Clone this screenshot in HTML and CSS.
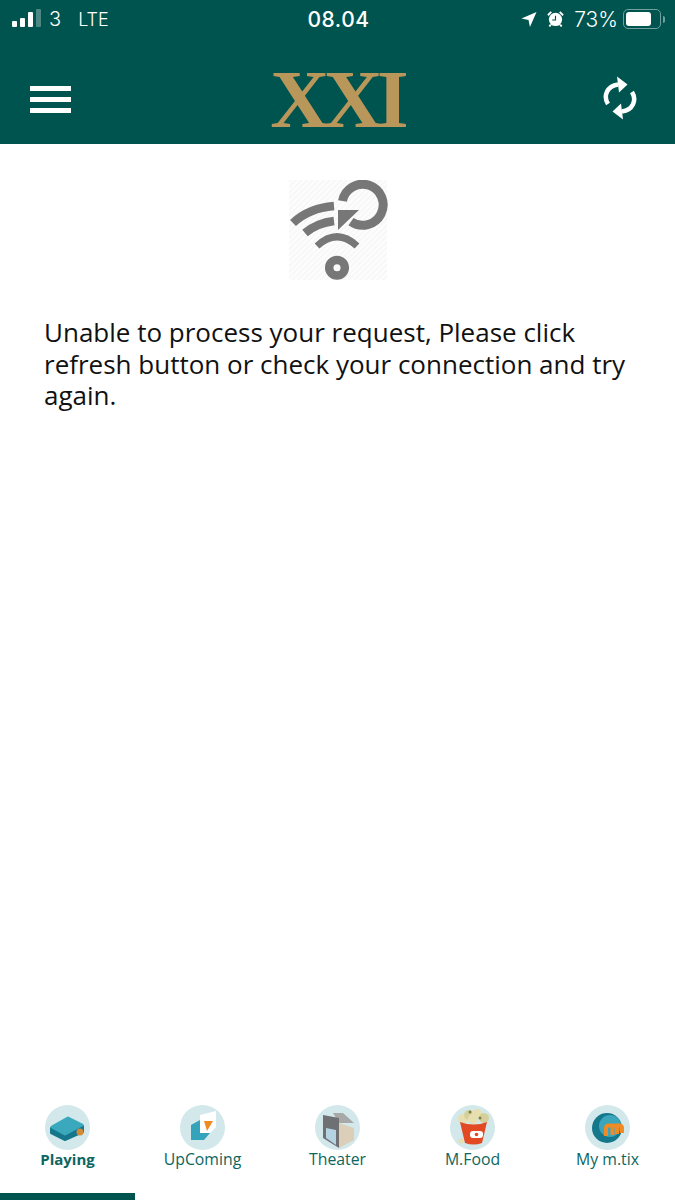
FILE: index.html
```html
<!DOCTYPE html>
<html lang="en">
<head>
  <meta charset="UTF-8">
  <meta name="viewport" content="width=device-width, initial-scale=1.0">
  <title>XXI</title>
  <link rel="stylesheet" href="styles.css">
</head>
<body>
  <div class="app">
    <header class="top">
      <div class="status-bar">
        <div class="status-left">
          <span class="signal"><i></i><i></i><i></i><i class="off"></i></span>
          <span class="carrier">3</span>
          <span class="network">LTE</span>
        </div>
        <div class="status-time">08.04</div>
        <div class="status-right">
          <svg class="status-icon" width="16" height="17" viewBox="0 0 17 17"><path d="M16.500 .5 L9.500 16.500 L8 9 L.5 7.500 Z" fill="#fff"/></svg>
          <svg class="status-icon" width="17" height="18" viewBox="0 0 18 18">
            <circle cx="9" cy="9.500" r="7" fill="#fff"/>
            <path d="M9 5.500 V10 H5.500" stroke="#00544f" stroke-width="1.200" fill="none"/>
            <path d="M1 5 L4.500 1.500 M17 5 L13.500 1.500 M4 15 L2.500 17 M14 15 L15.500 17" stroke="#fff" stroke-width="2"/>
          </svg>
          <span class="battery-text">73%</span>
          <span class="battery"><span class="battery-level"></span></span>
          <span class="battery-tip"></span>
        </div>
      </div>
      <nav class="toolbar">
        <button class="menu-button"><i></i><i></i><i></i></button>
        <div class="logo">XXI</div>
        <button class="refresh-button">
          <svg width="36" height="46" viewBox="0 0 36 46" fill="none">
            <path d="M6 29 C1 21 5 11 16 9.500" stroke="#fff" stroke-width="4.500"/>
            <path d="M15 1.500 L25.500 9.500 L17 17.500 Z" fill="#fff"/>
            <path d="M30 17 C35 25 31 35 20 36.500" stroke="#fff" stroke-width="4.500"/>
            <path d="M21 44.500 L10.500 36.500 L19 28.500 Z" fill="#fff"/>
          </svg>
        </button>
      </nav>
    </header>

    <main class="content">
      <div class="error-icon">
        <svg width="100" height="100" viewBox="18 10 100 100" fill="none">
          <defs>
            <pattern id="hatch" width="4" height="4" patternUnits="userSpaceOnUse" patternTransform="rotate(45)">
              <rect width="4" height="4" fill="#fdfdfd"/>
              <rect width="1.500" height="4" fill="#f6f6f6"/>
            </pattern>
          </defs>
          <rect x="18" y="10" width="98" height="100" fill="url(#hatch)"/>
          <circle cx="66" cy="97.700" r="7.800" stroke="#777" stroke-width="8.500"/>
          <path d="M46 76 Q66 57.500 86 76" stroke="#777" stroke-width="7"/>
          <path d="M34 63 Q46 53 63 51" stroke="#777" stroke-width="8.500"/>
          <path d="M22 53 Q38 38 63 36" stroke="#777" stroke-width="8.500"/>
          <path d="M71.500 31 A20.500 20.500 0 1 1 80 51.600" stroke="#777" stroke-width="9"/>
          <path d="M67 40 H88 L67 60 Z" fill="#777"/>
        </svg>
      </div>
      <p class="error-text">Unable to process your request, Please click refresh button or check your connection and try again.</p>
    </main>

    <footer class="tabs">
      <div class="tab active">
        <span class="tab-icon">
          <svg width="45" height="45" viewBox="0 0 45 45">
            <path d="M6 23 L20 30 L38 21 V27 L20 35 L6 28 Z" fill="#16768c" stroke="#16768c" stroke-width="2" stroke-linejoin="round"/>
            <path d="M7 22 L23 13 L37 20 L20 29 Z" fill="#3aa8bd" stroke="#3aa8bd" stroke-width="3" stroke-linejoin="round"/>
            <circle cx="35" cy="27" r="3.500" fill="#d08a3a"/>
          </svg>
        </span>
        <span class="tab-label">Playing</span>
      </div>
      <div class="tab">
        <span class="tab-icon">
          <svg width="45" height="45" viewBox="0 0 45 45">
            <path d="M20 10 L36 6 V22 L28 30 H20 Z" fill="#fff"/>
            <path d="M11 20 L20 15 V28 H30 L24 35 H11 Z" fill="#35a3ba"/>
            <path d="M24 16 H33 L27 26 Z" fill="#f08a24"/>
          </svg>
        </span>
        <span class="tab-label">UpComing</span>
      </div>
      <div class="tab">
        <span class="tab-icon">
          <svg width="45" height="45" viewBox="0 0 45 45">
            <path d="M18 8 H28 L39 18 L24 18 Z" fill="#a8a8a8"/>
            <path d="M24 18 L39 23 V35 L24 43 Z" fill="#dccfba"/>
            <path d="M8 10 L24 13 V43 L8 33 Z" fill="#6f7074"/>
            <path d="M11 23 L21 25 V40 L11 33 Z" fill="#b6d3e3"/>
          </svg>
        </span>
        <span class="tab-label">Theater</span>
      </div>
      <div class="tab">
        <span class="tab-icon">
          <svg width="45" height="45" viewBox="0 0 45 45">
            <circle cx="13" cy="14" r="5" fill="#e7dfb0"/>
            <circle cx="19" cy="10" r="5" fill="#d5d09a"/>
            <circle cx="27" cy="9" r="5" fill="#e7dfb0"/>
            <circle cx="34" cy="13" r="5" fill="#d5d09a"/>
            <circle cx="23" cy="14" r="5" fill="#e7dfb0"/>
            <circle cx="20" cy="7" r="1.500" fill="#7f7f45"/>
            <circle cx="30" cy="13" r="1.500" fill="#7f7f45"/>
            <path d="M10 17 Q24 22 37 17 L32 38 Q24 41 15 38 Z" fill="#e24a23"/>
            <rect x="20" y="26" width="13" height="7" rx="3" fill="#fff"/>
            <circle cx="26.500" cy="29.500" r="1.800" fill="#e24a23"/>
            <circle cx="11" cy="36" r="2.500" fill="#e7dfb0"/>
          </svg>
        </span>
        <span class="tab-label">M.Food</span>
      </div>
      <div class="tab">
        <span class="tab-icon">
          <svg width="45" height="45" viewBox="0 0 45 45" fill="none">
            <circle cx="22" cy="23" r="15" fill="#14778b"/>
            <circle cx="25" cy="21" r="11" fill="#3ba5bb"/>
            <path d="M21 31 V23 Q21 20.500 24 20.500 H34 Q37 20.500 37 23 V28" stroke="#f08a24" stroke-width="4"/>
            <path d="M27.500 30 V21 M32 20.500 V29" stroke="#f08a24" stroke-width="4"/>
          </svg>
        </span>
        <span class="tab-label">My m.tix</span>
      </div>
    </footer>
    <div class="tab-indicator"></div>
  </div>
</body>
</html>
```

FILE: styles.css
```css
body {
    margin: 0;
    background-color: white;
    font-family: "Open Sans", sans-serif;
}

.app {
    display: flex;
    flex-direction: column;
    height: 1200px;
}

.top {
    background-color: #00544f;
    color: white;
    height: 144px;
}

.status-bar {
    display: grid;
    grid-template-columns: 1fr auto 1fr;
    align-items: center;
    height: 38px;
    padding: 0 10px 0 12px;
    font-family: Inter, sans-serif;
    font-size: 20px;
}

.status-left {
    display: flex;
    align-items: center;
}

.signal {
    display: flex;
    align-items: flex-end;
    gap: 3px;
    height: 19px;
    margin-right: 8px;
    margin-bottom: 3px;
}

.signal i {
    width: 5px;
    border-radius: 1px;
    background-color: white;
}

.signal i:nth-child(1) { height: 6px; }
.signal i:nth-child(2) { height: 9px; }
.signal i:nth-child(3) { height: 15px; }
.signal i:nth-child(4) { height: 18px; }

.signal .off {
    background-color: #4d8784;
}

.carrier {
    margin-right: 17px;
    font-weight: 300;
}

.network {
    font-weight: 300;
    font-size: 18px;
}

.status-time {
    font-size: 21px;
    font-weight: 500;
    letter-spacing: 0.5px;
}

.status-right {
    display: flex;
    align-items: center;
    justify-content: flex-end;
}

.status-icon {
    margin-right: 10px;
}

.battery-text {
    font-size: 21px;
    font-weight: 300;
    margin-right: 5px;
}

.battery {
    display: block;
    box-sizing: border-box;
    width: 38px;
    height: 20px;
    padding: 2px;
    border: 1.5px solid #6fa09d;
    border-radius: 5px;
}

.battery-level {
    display: block;
    width: 25px;
    height: 100%;
    border-radius: 3px;
    background-color: white;
}

.battery-tip {
    width: 2px;
    height: 7px;
    margin-left: 2px;
    border-radius: 0 2px 2px 0;
    background-color: #6fa09d;
}

.toolbar {
    box-sizing: border-box;
    display: flex;
    align-items: center;
    justify-content: space-between;
    height: 106px;
    padding: 17px 37px 0 30px;
}

.menu-button {
    display: flex;
    flex-direction: column;
    gap: 6px;
    width: 41px;
    padding: 0;
    border: none;
    background: none;
}

.menu-button i {
    height: 5px;
    background-color: white;
}

.refresh-button {
    padding: 0;
    border: none;
    background: none;
    height: 46px;
    margin-bottom: 4px;
}

.logo {
    font-family: "Liberation Serif", serif;
    font-size: 82px;
    font-weight: 700;
    line-height: 1;
    letter-spacing: -6px;
    color: #b9975a;
    margin-top: 1px;
}

.content {
    flex: 1;
    padding: 36px 40px 0 44px;
}

.error-icon {
    display: flex;
    justify-content: center;
    margin-bottom: 37px;
    margin-right: 1px;
}

.error-text {
    margin: 0;
    font-size: 26px;
    line-height: 31.500px;
    color: #111;
}

.tabs {
    display: grid;
    grid-template-columns: repeat(5, 1fr);
    height: 88px;
}

.tab {
    display: flex;
    flex-direction: column;
    align-items: center;
}

.tab-icon {
    display: block;
    width: 45px;
    height: 45px;
    border-radius: 50%;
    background-color: #d2e8ea;
}

.tab-icon svg {
    display: block;
}

.tab-label {
    font-size: 15.800px;
    line-height: 18px;
    color: #0d6660;
}

.active .tab-label {
    font-size: 15px;
    font-weight: 700;
}

.tab-indicator {
    width: 135px;
    height: 7px;
    background-color: #00544f;
}
```
